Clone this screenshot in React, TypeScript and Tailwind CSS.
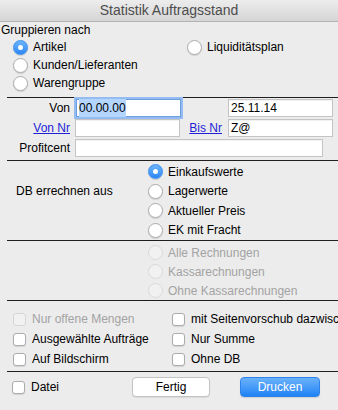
import React from 'react';

// Radio button in the old macOS Aqua look
function Radio({ checked = false, disabled = false }: { checked?: boolean; disabled?: boolean }) {
  if (checked) {
    return (
      <span className="flex h-[15px] w-[15px] shrink-0 items-center justify-center rounded-full border border-[#3b8ef0] bg-gradient-to-b from-[#6db5fb] to-[#2a87f5] shadow-[0_1px_1px_rgba(0,0,0,0.15)]">
        <span className="h-[5px] w-[5px] rounded-full bg-white" />
      </span>
    );
  }
  return (
    <span
      className={
        disabled
          ? 'h-[15px] w-[15px] shrink-0 rounded-full border border-[#d9d9d9] bg-[#f1f1f1]'
          : 'h-[15px] w-[15px] shrink-0 rounded-full border border-[#acacac] bg-white shadow-[0_1px_1px_rgba(0,0,0,0.12)]'
      }
    />
  );
}

function Checkbox({ disabled = false }: { disabled?: boolean }) {
  return (
    <span
      className={
        disabled
          ? 'h-[13px] w-[13px] shrink-0 rounded-[3px] border border-[#d6d6d6] bg-[#f1f1f1]'
          : 'h-[13px] w-[13px] shrink-0 rounded-[3px] border border-[#acacac] bg-white shadow-[0_1px_1px_rgba(0,0,0,0.1)]'
      }
    />
  );
}

const RadioRow = ({ label, checked, disabled, h = 'h-[18px]' }: { label: string; checked?: boolean; disabled?: boolean; h?: string }) => (
  <div className={`flex items-center gap-[5px] ${h}`}>
    <Radio checked={checked} disabled={disabled} />
    <span className={disabled ? 'text-[#a3a3a3]' : 'text-black'}>{label}</span>
  </div>
);

const CheckRow = ({ label, disabled }: { label: string; disabled?: boolean }) => (
  <div className="flex h-[20px] items-center gap-[6px] whitespace-nowrap">
    <Checkbox disabled={disabled} />
    <span className={disabled ? 'text-[#a3a3a3]' : 'text-black'}>{label}</span>
  </div>
);

const Sep = () => <div className="ml-[7px] h-px shrink-0 bg-[#1e1e1e]" />;

const Field = ({ value, w, focused }: { value?: string; w: string; focused?: boolean }) => (
  <div
    className={
      focused
        ? `flex h-[18px] items-center border border-[#6d9fe0] bg-white px-[2px] shadow-[0_0_0_2px_#93bdf2] ${w}`
        : `flex h-[18px] items-center border border-[#c4c4c4] bg-white px-[2px] shadow-[inset_0_1px_0_rgba(0,0,0,0.05)] ${w}`
    }
  >
    {focused ? <span className="bg-[#b4d5fe]">{value}</span> : value}
  </div>
);

export default function App() {
  return (
    <div className="flex h-[410px] w-[338px] flex-col overflow-hidden bg-[#ececec] font-['Liberation_Sans',Arial,sans-serif] text-[12px] text-black">
      {/* Title bar */}
      <div className="flex h-[22px] shrink-0 items-center justify-center border-b border-[#b3b3b3] bg-gradient-to-b from-[#ededed] to-[#d5d5d5] text-[14px] text-[#4d4d4d]">
        Statistik Auftragsstand
      </div>

      {/* Gruppieren nach */}
      <div className="flex h-[16px] items-center pl-[1px]">Gruppieren nach</div>
      <div className="grid grid-cols-[174px_1fr] pl-[13px]">
        <RadioRow label="Artikel" checked />
        <RadioRow label="Liquiditätsplan" />
        <RadioRow label="Kunden/Lieferanten" />
        <div />
        <RadioRow label="Warengruppe" />
      </div>
      <div className="h-[5px] shrink-0" />
      <Sep />

      {/* Date / number range */}
      <div className="flex flex-col gap-[2px] pt-[1px]">
        <div className="flex h-[18px] items-center">
          <span className="w-[70px] text-right">Von</span>
          <div className="ml-[6px]">
            <Field w="w-[105px]" value="00.00.00" focused />
          </div>
          <div className="ml-[47px]">
            <Field w="w-[105px]" value="25.11.14" />
          </div>
        </div>
        <div className="flex h-[18px] items-center">
          <span className="w-[70px] text-right text-[#1f1fd8] underline">Von Nr</span>
          <div className="ml-[5px]">
            <Field w="w-[105px]" />
          </div>
          <span className="w-[42px] text-right text-[#1f1fd8] underline">Bis Nr</span>
          <div className="ml-[6px]">
            <Field w="w-[105px]" value="Z@" />
          </div>
        </div>
        <div className="flex h-[18px] items-center">
          <span className="w-[70px] text-right">Profitcent</span>
          <div className="ml-[5px]">
            <Field w="w-[248px]" />
          </div>
        </div>
      </div>
      <div className="h-[3px] shrink-0" />
      <Sep />

      {/* DB errechnen aus */}
      <div className="flex pt-[1px]">
        <div className="w-[148px] pl-[16px] pt-[19.5px]">
          <div className="flex h-[19.5px] items-center">DB errechnen aus</div>
        </div>
        <div className="flex flex-col">
          <RadioRow label="Einkaufswerte" checked h="h-[19.5px]" />
          <RadioRow label="Lagerwerte" h="h-[19.5px]" />
          <RadioRow label="Aktueller Preis" h="h-[19.5px]" />
          <RadioRow label="EK mit Fracht" h="h-[19.5px]" />
        </div>
      </div>
      <Sep />

      <div className="flex flex-col pl-[148px] pt-[2px]">
        <RadioRow label="Alle Rechnungen" disabled h="h-[19px]" />
        <RadioRow label="Kassarechnungen" disabled h="h-[19px]" />
        <RadioRow label="Ohne Kassarechnungen" disabled h="h-[19px]" />
      </div>
      <Sep />

      {/* Options */}
      <div className="grid grid-cols-[159px_1fr] pl-[13px] pt-[8px]">
        <CheckRow label="Nur offene Mengen" disabled />
        <CheckRow label="mit Seitenvorschub dazwischen" />
        <CheckRow label="Ausgewählte Aufträge" />
        <CheckRow label="Nur Summe" />
        <CheckRow label="Auf Bildschirm" />
        <CheckRow label="Ohne DB" />
      </div>
      <div className="h-[2px] shrink-0" />
      <Sep />

      {/* Bottom row */}
      <div className="flex items-center pt-[5px]">
        <div className="w-[132px] pl-[12px]">
          <CheckRow label="Datei" />
        </div>
        <button className="flex h-[20px] w-[78px] items-center justify-center rounded-[4px] border border-[#c3c3c3] bg-white text-[12px] shadow-[0_1px_1px_rgba(0,0,0,0.08)]">
          Fertig
        </button>
        <button className="ml-[30px] flex h-[20px] w-[80px] items-center justify-center rounded-[4px] border border-[#2f84ec] bg-gradient-to-b from-[#6ab2fa] to-[#1d82f6] text-[12px] text-white shadow-[0_1px_1px_rgba(0,0,0,0.12)]">
          Drucken
        </button>
      </div>
    </div>
  );
}
